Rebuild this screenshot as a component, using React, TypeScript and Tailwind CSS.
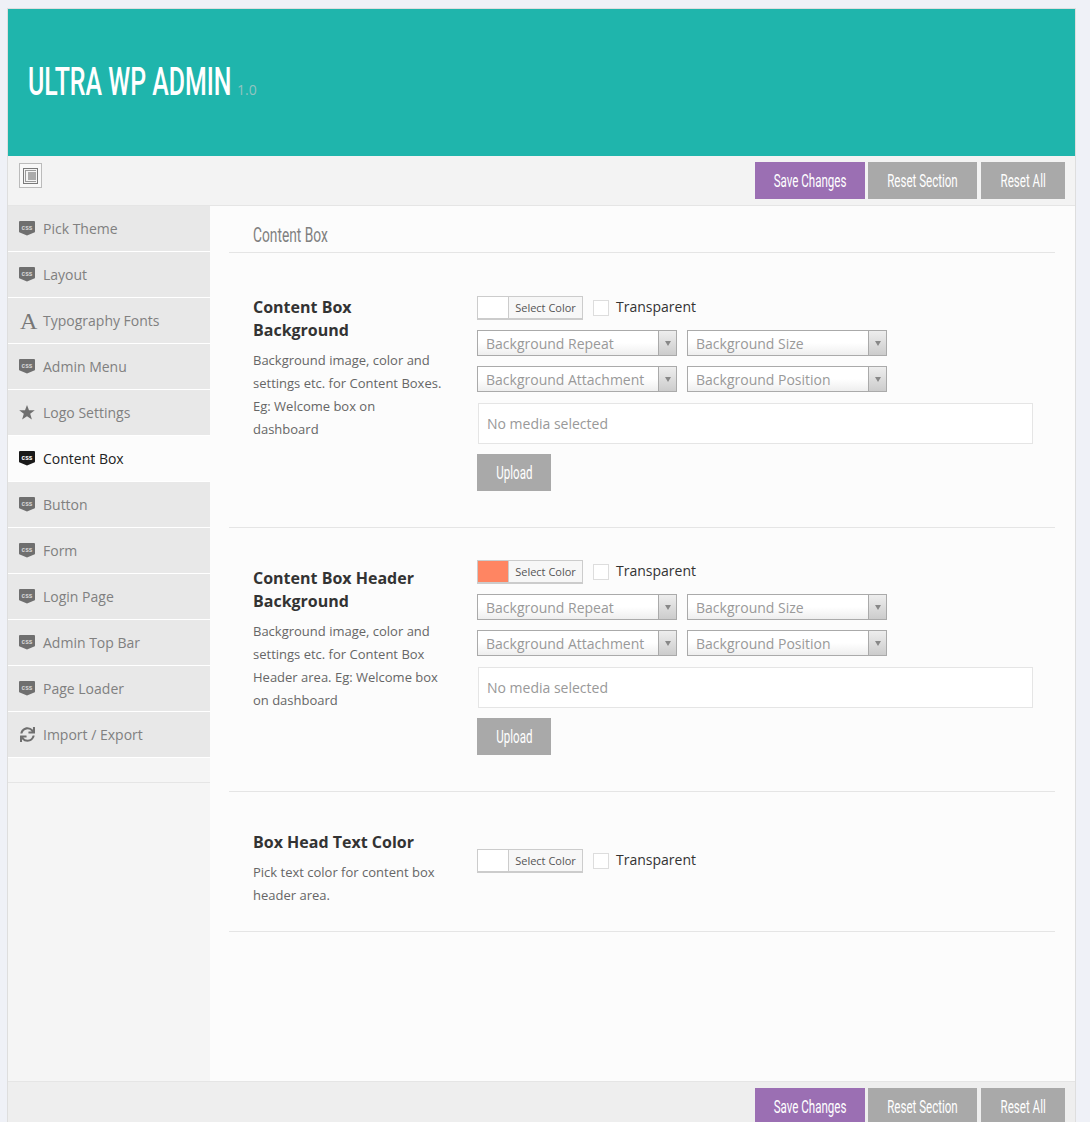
import React from 'react';
import { FaSync } from 'react-icons/fa';

const CssIcon = ({ active }: { active?: boolean }) => (
  <svg width="16" height="15" viewBox="0 0 16 15" className="shrink-0">
    <path d="M1 0h14a1 1 0 0 1 1 1v9.500q0 .8-.8 1.100L8 14.500.8 11.600q-.8-.3-.8-1.100V1a1 1 0 0 1 1-1z" fill={active ? '#1a1a1a' : '#6f6f6f'} />
    <text x="8" y="8.600" textAnchor="middle" fontSize="6.500" fontWeight="700" fill={active ? '#ffffff' : '#d5d5d5'} fontFamily="Liberation Sans, sans-serif">css</text>
  </svg>
);

const LayoutIcon = () => (
  <svg width="15" height="16" viewBox="0 0 15 16">
    <rect x="0.500" y="0.500" width="14" height="15" fill="#f4f4f4" stroke="#7a7a7a" />
    <rect x="2" y="2" width="11" height="1" fill="#9a9a9a" />
    <rect x="2" y="13" width="11" height="1" fill="#9a9a9a" />
    <rect x="2" y="3" width="1" height="10" fill="#9a9a9a" />
    <rect x="5" y="4" width="8" height="8" fill="#ababab" />
  </svg>
);

const StarIcon = () => (
  <svg width="16" height="15" viewBox="0 0 16 15">
    <path d="M8 0l2 5.300h5.800l-4.600 3.500 1.700 5.700L8 11.200 3.100 14.500l1.700-5.700L.2 5.300H6z" fill="#6f6f6f" />
  </svg>
);

const menu = [
  { label: 'Pick Theme', icon: 'css' },
  { label: 'Layout', icon: 'css' },
  { label: 'Typography Fonts', icon: 'font' },
  { label: 'Admin Menu', icon: 'css' },
  { label: 'Logo Settings', icon: 'star' },
  { label: 'Content Box', icon: 'css', active: true },
  { label: 'Button', icon: 'css' },
  { label: 'Form', icon: 'css' },
  { label: 'Login Page', icon: 'css' },
  { label: 'Admin Top Bar', icon: 'css' },
  { label: 'Page Loader', icon: 'css' },
  { label: 'Import / Export', icon: 'sync' },
];

const Narrow = ({ children }: { children: React.ReactNode }) => (
  <span className="inline-block origin-center scale-x-[0.66] whitespace-nowrap [font-family:'Roboto',sans-serif]">{children}</span>
);

const ActionButtons = () => (
  <div className="flex justify-end gap-[3px] pr-[10px]">
    <button className="h-[37px] w-[110px] bg-[#9b6fb3] text-white text-[17.5px]"><Narrow>Save Changes</Narrow></button>
    <button className="h-[37px] w-[109px] bg-[#a9a9a9] text-white text-[17.5px]"><Narrow>Reset Section</Narrow></button>
    <button className="ml-[1px] h-[37px] w-[84px] bg-[#a9a9a9] text-white text-[17.5px]"><Narrow>Reset All</Narrow></button>
  </div>
);

const ColorPicker = ({ swatch }: { swatch: string }) => (
  <div className="flex h-[24px] items-center">
    <div className="box-border flex h-[24px] w-[106px] overflow-hidden border border-b-2 border-[#cccccc] bg-[#f7f7f7]">
      <div className="w-[31px] border-r border-[#cccccc]" style={{ background: swatch }} />
      <div className="flex-1 whitespace-nowrap text-center text-[11px] leading-[22px] text-[#555555]">Select Color</div>
    </div>
    <div className="ml-[10px] h-[16px] w-[16px] border border-[#dddddd] bg-white" />
    <span className="-mt-[3px] ml-[7px] text-[14px] text-[#333333]">Transparent</span>
  </div>
);

const Select = ({ label }: { label: string }) => (
  <div className="flex h-[26px] w-[200px] border border-[#aaaaaa] bg-gradient-to-b from-white from-50% to-[#eeeeee]">
    <div className="flex-1 pl-[8px] text-[14px] leading-[25px] text-[#999999]">{label}</div>
    <div className="flex w-[18px] items-center justify-center border-l border-[#aaaaaa] bg-gradient-to-b from-[#eeeeee] to-[#cccccc]">
      <div className="mt-[1px] h-0 w-0 border-x-[3.5px] border-t-[5px] border-x-transparent border-t-[#888888]" />
    </div>
  </div>
);

const Upload = () => (
  <div className="flex flex-col">
    <div className="ml-[1px] mt-[11px] h-[41px] w-[555px] border border-[#e5e5e5] bg-white pl-[8px] text-[14px] leading-[39px] text-[#999999]">No media selected</div>
    <button className="mt-[10px] h-[37px] w-[74px] bg-[#a9a9a9] text-white text-[17.5px]"><Narrow>Upload</Narrow></button>
  </div>
);

const BackgroundControls = () => (
  <>
    <div className="mt-[10px] flex gap-[10px]"><Select label="Background Repeat" /><Select label="Background Size" /></div>
    <div className="mt-[10px] flex gap-[10px]"><Select label="Background Attachment" /><Select label="Background Position" /></div>
    <Upload />
  </>
);

const Label = ({ title, lines }: { title: string[]; lines: string[] }) => (
  <div className="w-[248px] shrink-0 pl-[24px]">
    <div className="text-[16px] font-bold leading-[23px] text-[#333333]">{title.map((t) => <div key={t}>{t}</div>)}</div>
    <div className="mt-[7px] text-[13px] leading-[23px] text-[#666666]">{lines.map((t) => <div key={t} className="whitespace-nowrap">{t}</div>)}</div>
  </div>
);

export default function App() {
  return (
    <div className="h-[1122px] overflow-hidden bg-[#eff1f7] pl-[7px] pr-[14px] pt-[8px] [font-family:'Open_Sans',sans-serif]">
      <div className="flex h-[1200px] flex-col border border-[#dedede] bg-[#fcfcfc]">
        <header className="flex h-[147px] shrink-0 items-center bg-[#1fb5ac] pb-[4px] pl-[20px]">
          <h1 className="inline-block text-[38px] leading-none text-white">
            <span className="inline-block w-[204px] origin-left scale-x-[0.655] whitespace-nowrap font-medium [font-family:'Roboto',sans-serif]">ULTRA WP ADMIN</span>
          </h1>
          <span className="ml-[5px] mt-[18px] text-[14px] text-[#93c4c0]">1.0</span>
        </header>

        <div className="flex h-[50px] shrink-0 justify-between border-b border-[#e5e5e5] bg-[#f3f3f3] pt-[6px]">
          <div className="ml-[11px] mt-[1px] flex h-[25px] w-[23px] items-center justify-center border border-[#bbbbbb] bg-[#f8f8f8]">
            <LayoutIcon />
          </div>
          <ActionButtons />
        </div>

        <div className="flex h-[875px] shrink-0">
          <aside className="w-[202px] shrink-0 bg-[#f5f5f5]">
            {menu.map((m) => (
              <div
                key={m.label}
                className={`flex h-[46px] items-center border-b border-white pl-[11px] text-[14px] ${m.active ? 'bg-[#fcfcfc] text-[#222222]' : 'bg-[#e8e8e8] text-[#808080]'}`}
              >
                <span className="flex w-[24px] shrink-0 items-center">
                  {m.icon === 'css' && <CssIcon active={m.active} />}
                  {m.icon === 'star' && <StarIcon />}
                  {m.icon === 'sync' && <FaSync className="ml-[1px] text-[15px] text-[#6f6f6f]" />}
                  {m.icon === 'font' && <span className="ml-[1px] text-[24px] leading-none text-[#777777] [font-family:'Liberation_Serif',serif]">A</span>}
                </span>
                {m.label}
              </div>
            ))}
            <div className="h-[25px] border-b border-[#e5e5e5]" />
          </aside>

          <main className="flex-1 pl-[19px] pr-[20px]">
            <div className="h-[47px] border-b border-[#e5e5e5] pl-[24px] pt-[14px] text-[21px] leading-[28px] text-[#808080]">
              <span className="inline-block origin-left scale-x-[0.655] whitespace-nowrap [font-family:'Roboto',sans-serif]">Content Box</span>
            </div>

            <section className="flex h-[275px] border-b border-[#e5e5e5] pt-[43px]">
              <Label title={['Content Box', 'Background']} lines={['Background image, color and', 'settings etc. for Content Boxes.', 'Eg: Welcome box on', 'dashboard']} />
              <div className="flex flex-col"><ColorPicker swatch="#ffffff" /><BackgroundControls /></div>
            </section>

            <section className="flex h-[264px] border-b border-[#e5e5e5] pt-[32px]">
              <div className="pt-[7px]"><Label title={['Content Box Header', 'Background']} lines={['Background image, color and', 'settings etc. for Content Box', 'Header area. Eg: Welcome box', 'on dashboard']} /></div>
              <div className="flex flex-col"><ColorPicker swatch="#ff8562" /><BackgroundControls /></div>
            </section>

            <section className="flex h-[140px] border-b border-[#e5e5e5] pt-[39px]">
              <Label title={['Box Head Text Color']} lines={['Pick text color for content box', 'header area.']} />
              <div className="pt-[18px]"><ColorPicker swatch="#ffffff" /></div>
            </section>
          </main>
        </div>

        <div className="h-[60px] border-t border-[#e5e5e5] bg-[#eeeeee] pt-[6px]">
          <ActionButtons />
        </div>
      </div>
    </div>
  );
}
